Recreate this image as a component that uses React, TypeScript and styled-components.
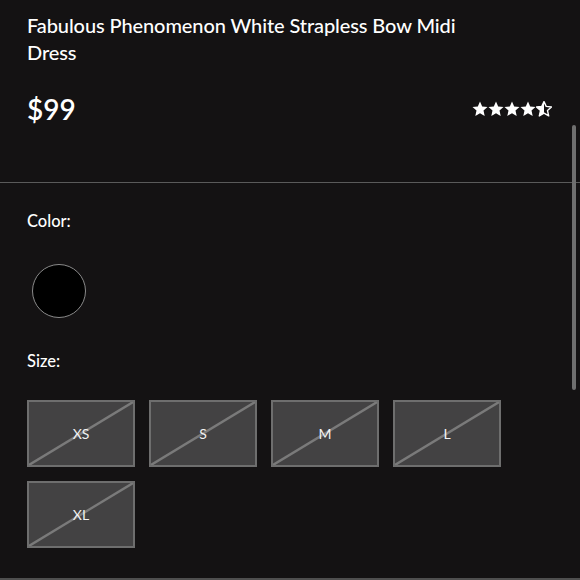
import styled, { createGlobalStyle } from "styled-components";

const GlobalStyle = createGlobalStyle`
  html, body {
    margin: 0;
    padding: 0;
    background-color: #141213;
  }
  * {
    box-sizing: border-box;
  }
`;

const Wrap = styled.div`
  position: relative;
  width: 580px;
  height: 580px;
  overflow: hidden;
  background-color: #141213;
  color: #ffffff;
  font-family: Lato, "Liberation Sans", sans-serif;
  border-bottom: 2px solid #4f4f4f;
  padding-bottom: 3px;
`;

const Header = styled.div`
  padding: 12px 27px 0 27px;
  height: 182px;
`;

const Title = styled.h1`
  margin: 0;
  max-width: 480px;
  font-size: 20px;
  font-weight: 500;
  line-height: 27px;
  letter-spacing: -0.1px;
`;

const PriceRow = styled.div`
  display: flex;
  align-items: center;
  justify-content: space-between;
  margin-top: 25px;
`;

const Price = styled.div`
  font-size: 28px;
  font-weight: 600;
  line-height: 36px;
`;

const Stars = styled.div`
  display: flex;
  margin-right: 1px;
`;

const Divider = styled.hr`
  margin: 0;
  border: none;
  border-top: 1px solid #5a5a5a;
`;

const Options = styled.div`
  padding: 0 27px;
`;

const Label = styled.div`
  font-size: 16.5px;
  font-weight: 500;
  line-height: 22px;
  margin-top: ${(p: { $top: number }) => p.$top}px;
`;

const SwatchWrap = styled.div`
  padding: 0 5px;
  margin-top: 32px;
`;

const Swatch = styled.div`
  width: 54px;
  height: 54px;
  border-radius: 50%;
  background-color: #000000;
  border: 1.5px solid #8a8a8a;
`;

const SizeGrid = styled.div`
  display: grid;
  grid-template-columns: repeat(4, 108px);
  gap: 14px;
  margin-top: 28px;
`;

const SizeBox = styled.div`
  position: relative;
  height: 67px;
  background-color: #434243;
  border: 2px solid #6e6e6e;
  display: flex;
  align-items: center;
  justify-content: center;
  font-size: 14px;
  font-weight: 400;
  color: #f2f2f2;
  overflow: hidden;

  svg {
    position: absolute;
    inset: 0;
    width: 100%;
    height: 100%;
  }
  span {
    position: relative;
  }
`;

const ScrollThumb = styled.div`
  position: absolute;
  left: 572px;
  top: 125px;
  width: 4px;
  height: 265px;
  border-radius: 2px;
  background-color: #6f6f6f;
`;

const StarPath =
  "M8 0.6 L10.2 5.4 L15.5 6 L11.5 9.6 L12.7 14.9 L8 12.2 L3.3 14.9 L4.5 9.6 L0.5 6 L5.8 5.4 Z";

function Star({ half }: { half?: boolean }) {
  return (
    <svg width="16" height="16" viewBox="0 0 16 16">
      {half ? (
        <>
          <defs>
            <clipPath id="halfStar">
              <rect x="0" y="0" width="8" height="16" />
            </clipPath>
          </defs>
          <path d={StarPath} fill="none" stroke="#fff" strokeWidth="1.4" strokeLinejoin="round" />
          <path d={StarPath} fill="#fff" clipPath="url(#halfStar)" />
        </>
      ) : (
        <path d={StarPath} fill="#fff" />
      )}
    </svg>
  );
}

const sizes = ["XS", "S", "M", "L", "XL"];

export default function App() {
  return (
    <Wrap>
      <GlobalStyle />
      <Header>
        <Title>Fabulous Phenomenon White Strapless Bow Midi Dress</Title>
        <PriceRow>
          <Price>$99</Price>
          <Stars>
            <Star />
            <Star />
            <Star />
            <Star />
            <Star half />
          </Stars>
        </PriceRow>
      </Header>
      <Divider />
      <Options>
        <Label $top={27}>Color:</Label>
        <SwatchWrap>
          <Swatch />
        </SwatchWrap>
        <Label $top={32}>Size:</Label>
        <SizeGrid>
          {sizes.map((s) => (
            <SizeBox key={s}>
              <svg viewBox="0 0 108 67" preserveAspectRatio="none">
                <line x1="0" y1="67" x2="108" y2="0" stroke="#7a7a7a" strokeWidth="2.5" />
              </svg>
              <span>{s}</span>
            </SizeBox>
          ))}
        </SizeGrid>
      </Options>
      <ScrollThumb />
    </Wrap>
  );
}
